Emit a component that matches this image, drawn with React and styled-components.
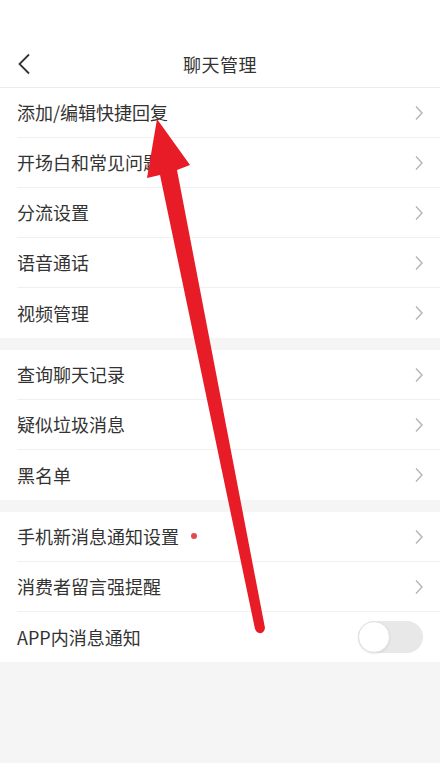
import React, { useState } from 'react';
import styled, { createGlobalStyle } from 'styled-components';

const GlobalStyle = createGlobalStyle`
	html, body {
		margin: 0;
		padding: 0;
		background: #f5f5f5;
	}
	body {
		font-family: 'Noto Sans CJK SC', 'Noto Sans', sans-serif;
		color: #333;
	}
`;

const groups = [
	[
		{ label: '添加/编辑快捷回复' },
		{ label: '开场白和常见问题' },
		{ label: '分流设置' },
		{ label: '语音通话' },
		{ label: '视频管理' },
	],
	[{ label: '查询聊天记录' }, { label: '疑似垃圾消息' }, { label: '黑名单' }],
	[
		{ label: '手机新消息通知设置', dot: true },
		{ label: '消费者留言强提醒' },
		{ label: 'APP内消息通知', toggle: true },
	],
];

const ChevronRight = () => (
	<svg width="10" height="16" viewBox="0 0 10 16">
		<path d="M2 1.5 L8 8 L2 14.5" fill="none" stroke="#b5b5b5" strokeWidth="1.4" />
	</svg>
);

const ChevronLeft = () => (
	<svg width="14" height="22" viewBox="0 0 14 22">
		<path d="M12 1.5 L2.5 11 L12 20.5" fill="none" stroke="#333" strokeWidth="1.8" />
	</svg>
);

const App = () => {
	const [appNotice, setAppNotice] = useState(false);

	return (
		<Page>
			<GlobalStyle />
			<StatusArea />
			<Header>
				<BackButton>
					<ChevronLeft />
				</BackButton>
				<Title>聊天管理</Title>
			</Header>
			{groups.map((group, gi) => (
				<Group key={gi} first={gi === 0}>
					{group.map((item, i) => (
						<Row key={item.label} last={i === group.length - 1}>
							<Label>
								{item.label}
								{item.dot && <Dot />}
							</Label>
							{item.toggle ? (
								<Switch on={appNotice} onClick={() => setAppNotice(!appNotice)}>
									<Knob on={appNotice} />
								</Switch>
							) : (
								<ChevronRight />
							)}
						</Row>
					))}
				</Group>
			))}
			<Annotation width="440" height="763" viewBox="0 0 440 763">
				<path
					d="M157 119 L190 165 L177 170 L265 628 Q264 634 259 633 Q256 632 255 629 L160 175 L147 178 Z"
					fill="#e81c27"
				/>
			</Annotation>
		</Page>
	);
};
export default App;

const Page = styled.div`
	position: relative;
	width: 440px;
	min-height: 763px;
	background: #f5f5f5;
	overflow: hidden;
`;

const StatusArea = styled.div`
	height: 40px;
	background: #fff;
`;

const Header = styled.div`
	position: relative;
	height: 47px;
	background: #fff;
	border-bottom: 1px solid #ececec;
	display: flex;
	align-items: center;
	justify-content: center;
`;

const BackButton = styled.div`
	position: absolute;
	left: 17px;
	top: 13px;
	display: flex;
`;

const Title = styled.div`
	font-size: 18px;
	color: #333;
	letter-spacing: 0.5px;
`;

const Group = styled.div`
	background: #fff;
	margin-top: ${(props) => (props.first ? '0' : '12px')};
`;

const Row = styled.div`
	height: 50px;
	margin-left: 17px;
	padding-right: 16px;
	box-sizing: border-box;
	display: flex;
	align-items: center;
	justify-content: space-between;
	border-bottom: ${(props) => (props.last ? 'none' : '1px solid #f0f0f0')};
`;

const Label = styled.div`
	font-size: 18px;
	color: #333;
	display: flex;
	align-items: center;
	margin-top: -1px;
`;

const Dot = styled.span`
	width: 6px;
	height: 6px;
	border-radius: 50%;
	background: #e5494d;
	margin-left: 12px;
`;

const Switch = styled.div`
	width: 65px;
	height: 32px;
	border-radius: 16px;
	background: ${(props) => (props.on ? '#ff5000' : '#e8e8e8')};
	margin-right: 1px;
	position: relative;
	cursor: pointer;
`;

const Knob = styled.div`
	position: absolute;
	top: 0;
	left: ${(props) => (props.on ? '33px' : '0')};
	width: 30px;
	height: 30px;
	border-radius: 50%;
	background: #fff;
	border: 1px solid #e0e0e0;
	box-shadow: 0 1px 2px rgba(0, 0, 0, 0.08);
`;

const Annotation = styled.svg`
	position: absolute;
	left: 0;
	top: 0;
	pointer-events: none;
`;
